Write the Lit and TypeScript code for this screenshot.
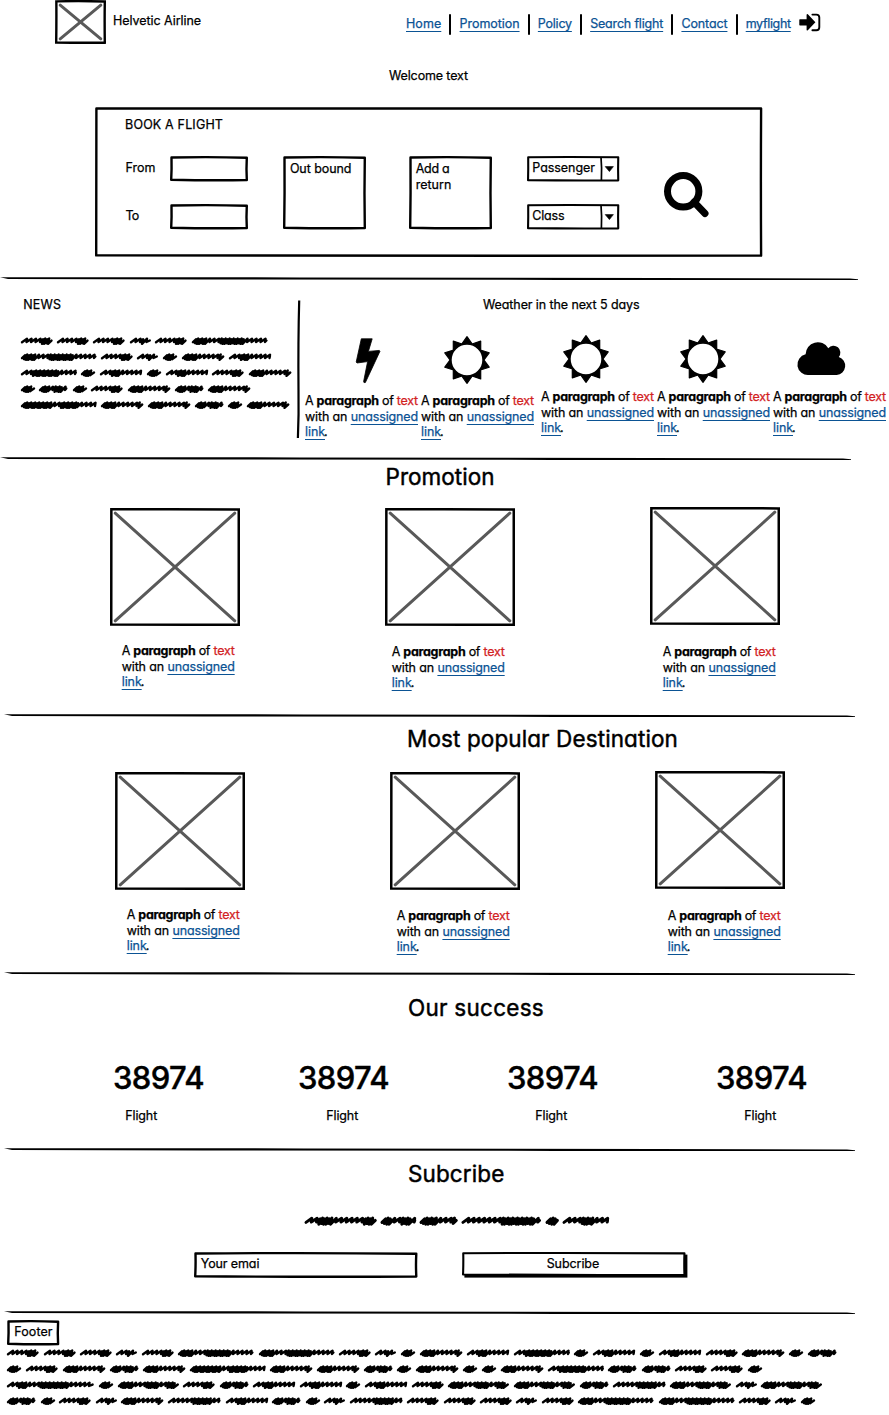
import { LitElement, html, css, svg } from "lit";
import { customElement, property } from "lit/decorators.js";

/** One line of text whose tracking is adjusted so that it spans a given width. */
@customElement("fit-text")
class FitText extends LitElement {
  @property({ type: Number }) span = 0;
  static styles = css`
    :host {
      display: block;
      width: max-content;
      white-space: pre;
    }
  `;
  firstUpdated() {
    const natural = this.getBoundingClientRect().width;
    const count = (this.textContent ?? "").length;
    if (this.span && count) {
      this.style.letterSpacing = `${((this.span - natural) / count).toFixed(3)}px`;
    }
  }
  render() {
    return html`<slot></slot>`;
  }
}

/** Full-width hand-drawn divider. */
@customElement("sketch-rule")
class SketchRule extends LitElement {
  @property({ type: Number }) from = 4;
  @property({ type: Number }) to = 855;
  static styles = css`
    :host { display: block; height: 4px; }
    svg { display: block; overflow: visible; }
  `;
  render() {
    const a = this.from;
    const b = this.to;
    return html`<svg width="889" height="4" viewBox="0 0 889 4">
      <path d="M${a} 1.2 L${a + 300} 1.4 L${b - 200} 1.9 L${b - 8} 2.5 L${b} 3.3 L${b} 3.9 L${b - 300} 3.9 L${a + 200} 3.5 L${a + 8} 3 Z" />
    </svg>`;
  }
}

/** Rectangle with slightly uneven pen strokes; content is stacked on top. */
@customElement("sketch-box")
class SketchBox extends LitElement {
  @property({ type: Number }) w = 100;
  @property({ type: Number }) h = 25;
  @property({ type: Number }) pen = 2.4;
  @property({ type: Number }) wobble = 0.6;
  @property({ type: Boolean }) crossed = false;
  static styles = css`
    :host { display: grid; width: max-content; }
    svg { display: block; grid-area: 1 / 1; overflow: visible; }
    .body { grid-area: 1 / 1; min-width: 0; }
    .frame { fill: none; stroke: #000; stroke-linejoin: round; }
    .square { stroke-linejoin: miter; }
    .cross { fill: none; stroke: #595959; stroke-linecap: round; }
  `;
  render() {
    const { w, h, pen, wobble: k } = this;
    const p = pen / 2;
    const inset = 5.2;
    return html`<svg width=${w} height=${h} viewBox="0 0 ${w} ${h}">
        ${this.crossed
          ? svg`<path class="cross" stroke-width="3" d="M${inset} ${inset}L${w - inset} ${h - inset}M${w - inset} ${inset}L${inset} ${h - inset}"/>`
          : ""}
        <path class="frame ${this.crossed ? "square" : ""}" stroke-width=${pen}
          d="M${p + k * 0.5} ${p + k * 0.5} Q${w / 2} ${p - k} ${w - p} ${p + k * 0.8} Q${w - p - k} ${h / 2} ${w - p} ${h - p - k * 0.4} Q${w / 2} ${h - p + k * 0.5} ${p} ${h - p - k} Q${p + k} ${h / 2} ${p + k * 0.5} ${p + k * 0.5} Z" />
      </svg>
      <div class="body"><slot></slot></div>`;
  }
}

type Stretch = [number, number];

/** Where the pen doubles back, as fractions of a word, by word code. */
const WORDS: Record<string, { w: number; dense: Stretch[] }> = {
  a: { w: 14, dense: [[0, 0.6]] },
  b: { w: 20.8, dense: [[0.35, 0.5]] },
  c: { w: 28.3, dense: [[0, 0.25], [0.45, 0.72]] },
  d: { w: 31.5, dense: [[0.5, 0.95]] },
  e: { w: 42.2, dense: [[0, 0.3], [0.75, 1]] },
  f: { w: 41.9, dense: [[0.15, 0.42]] },
  g: { w: 52.4, dense: [[0.42, 0.76]] },
  h: { w: 55.8, dense: [[0.15, 0.62]] },
  i: { w: 60.8, dense: [[0, 0.2], [0.42, 0.62], [0.75, 0.88]] },
  j: { w: 75.4, dense: [[0, 0.15], [0.35, 0.66]] },
  k: { w: 75.2, dense: [[0, 0.38], [0.5, 0.72]] },
  l: { w: 86.6, dense: [[0.1, 0.2], [0.32, 0.68]] },
  m: { w: 71.3, dense: [[0.12, 0.34], [0.78, 1]] },
  n: { w: 34.8, dense: [[0, 0.2], [0.4, 0.75]] },
  o: { w: 37.3, dense: [[0, 0.35], [0.7, 1]] },
  p: { w: 78.5, dense: [[0.46, 0.88]] },
  q: { w: 12.4, dense: [[0, 1]] },
  r: { w: 45.6, dense: [[0.3, 0.6]] },
};

/** A line of scribbled placeholder words. */
@customElement("scribble-line")
class ScribbleLine extends LitElement {
  @property() words = "";
  @property({ type: Number }) amp = 2.4;
  @property({ type: Number }) pen = 2.4;
  static styles = css`
    :host { display: flex; gap: 4.87px; height: 10px; }
    svg { display: block; flex: none; overflow: visible; }
    path { fill: none; stroke: #000; stroke-linecap: round; stroke-linejoin: round; }
  `;
  private trace(code: string) {
    const { w, dense } = WORDS[code];
    const a = this.amp;
    const s = a / 2.4;
    let x = 1;
    let d = `M${x} ${(5 + a * 0.5).toFixed(1)}`;
    let i = 0;
    while (x + 5.4 * s < w) {
      const thick = dense.some(([from, to]) => x / w >= from && x / w < to);
      const up = thick ? a * (i % 2 ? 1.05 : 0.75) : a * 0.95;
      const down = thick ? a * (i % 3 ? 1.15 : 0.9) : a * 0.4;
      d += `L${(x + (thick ? 3.2 : 5) * s).toFixed(1)} ${(5 - up).toFixed(1)}`;
      x += (thick ? 2 : 4.5) * s;
      d += `L${x.toFixed(1)} ${(5 + down).toFixed(1)}`;
      i++;
    }
    return d + `L${w - 1} ${5 - a * 0.2}`;
  }
  render() {
    return [...this.words].map(
      (c) => html`<svg width=${WORDS[c].w} height="10"><path stroke-width=${this.pen} d=${this.trace(c)} /></svg>`
    );
  }
}

const NAV: [string, number][] = [
  ["Home", 35.3],
  ["Promotion", 60],
  ["Policy", 34],
  ["Search flight", 73],
  ["Contact", 46],
  ["myflight", 45],
];

const sunPath = (() => {
  let d = "";
  for (let i = 0; i < 10; i++) {
    const t = (i * Math.PI) / 5;
    const pt = (r: number, s: number) => `${(24 + r * Math.sin(t + s)).toFixed(1)} ${(24 - r * Math.cos(t + s)).toFixed(1)}`;
    d += `M${pt(23.3, 0)}L${pt(17.2, 0.29)}L${pt(15, 0)}L${pt(17.2, -0.29)}Z`;
  }
  return d;
})();

const sun = html`<svg width="48" height="48" viewBox="0 0 48 48">
  <path d=${sunPath} stroke="#000" stroke-width="1.2" stroke-linejoin="round" />
  <circle cx="24" cy="24" r="16.2" fill="#fff" stroke="#000" stroke-width="1.8" />
</svg>`;

const bolt = html`<svg width="48" height="48" viewBox="0 0 48 48">
  <path d="M17.3 2.8H28.2L24.4 15.4L35.3 14.4L36 15.2L21.4 46.5L20 46.6L19.6 45.6L23.6 25.6L13 27L12.2 26Z" stroke="#000" stroke-width=".8" stroke-linejoin="round" />
</svg>`;

const cloud = html`<svg width="48" height="48" viewBox="0 0 48 48">
  <path d="M10.9 40A10.5 10.5 0 0 1 7.6 19.3A12.2 12.2 0 0 1 30.3 13.2A6.5 6.5 0 0 1 40.8 21.9A9.3 9.3 0 0 1 38.7 40Z" />
</svg>`;

const paragraph = html`<div class="para">
  <fit-text span="112.8">A <b>paragraph</b> of <span class="red">text</span></fit-text>
  <fit-text span="113">with an <a class="link">unassigned</a></fit-text>
  <div class="last"><fit-text class="link" span="20">link</fit-text><span class="dot">.</span></div>
</div>`;

@customElement("app-root")
class AppRoot extends LitElement {
  static styles = css`
    :host {
      display: block;
      width: 889px;
      height: 1415px;
      overflow: hidden;
      background: #fff;
      color: #000;
      font: 400 12.5px/16px Inter, "Open Sans", sans-serif;
      font-feature-settings: "cv11";
      -webkit-text-stroke: 0.25px currentColor;
    }
    section { display: flow-root; box-sizing: border-box; }
    svg { display: block; flex: none; overflow: visible; }
    b { font-weight: 700; }
    .red { color: #d2221f; }
    .link {
      color: #0b5394;
      text-decoration: underline;
      text-decoration-thickness: 1px;
      text-underline-offset: 2.5px;
      text-decoration-skip-ink: none;
    }
    .heading { font-size: 22.5px; line-height: 28px; -webkit-text-stroke: 0.45px currentColor; }

    .intro { height: 276px; }
    .topbar { display: flex; height: 63px; padding-left: 55px; align-items: flex-start; }
    .brand { margin: 12.5px 0 0 7px; width: 293px; }
    .nav { display: flex; margin-top: 13px; }
    .nav .link { margin-top: 2.5px; }
    .bar { width: 2px; height: 20.5px; margin: 1px 8.15px 0; background: #000; border-radius: 1px; }
    .signin { margin: 0 0 0 8px; }
    .welcome { margin: 4.5px 0 23.6px 389px; height: 16px; }
    .booking { margin-left: 95.2px; }
    .booktitle { margin: 10px 0 23.2px 29.9px; }
    .form { display: grid; grid-template-columns: 44.5px 113px 125.9px 118px 137px 50px; padding-left: 30.2px; align-items: start; }
    .pair { display: grid; gap: 22.5px; }
    .pair > fit-text { height: 25.5px; padding-top: 4px; box-sizing: border-box; }
    .areatext { padding: 5px 0 0 7px; }
    .combo { display: flex; }
    .combo fit-text { margin: 4px 0 0 5.6px; }
    .combotext { width: 73px; }
    .search { margin: 15px 0 0 -0.4px; }

    .today { display: flex; height: 176px; }
    .news { width: 277px; padding: 16.5px 0 0 20.5px; }
    .newstitle { margin: 0 0 23.8px 2.7px; }
    .scribbles { display: grid; row-gap: 5.85px; }
    .weather { padding-top: 16.5px; }
    .weathertitle { margin-left: 183px; }
    .days { display: flex; margin: 22px 0 0 5px; }
    .day { width: 116px; flex: none; }
    .icon { height: 54px; }
    .i0 { padding-left: 39px; }
    .i1 { padding-left: 22px; }
    .i2 { padding-left: 21px; }
    .i3 { padding-left: 22px; }
    .i4 { padding-left: 25px; }
    .gap { width: 4px; flex: none; }
    .first .para { margin-top: 4px; }
    .first .icon { padding-top: 1px; height: 53px; }

    .para { height: 47px; }
    .para fit-text { height: 16px; }
    .para fit-text:nth-child(2) { height: 15px; }
    .last { display: flex; }
    .dot { margin-left: -1px; }

    .promo { height: 253px; }
    .promo .heading { margin: 3px 0 17px 385.5px; height: 28px; }
    .popular { height: 254px; }
    .popular .heading { margin: 8px 0 19px 407px; height: 28px; }
    .cards { display: flex; padding-left: 110px; }
    .popular .cards { padding-left: 115px; }
    .card { width: 275px; flex: none; }
    .card:nth-child(2) { width: 265px; }
    .card:nth-child(3) { margin-top: -1px; }
    .card .para { margin: 17.2px 0 0 11.7px; }
    .card:nth-child(2) .para { margin: 18px 0 0 6.7px; }
    .card:nth-child(3) .para { margin: 19px 0 0 12.7px; }

    .success { height: 172px; }
    .success .heading { margin-left: 408px; padding-top: 18.5px; }
    .stats { display: flex; margin: 37.5px 0 0 113px; }
    .stat { width: 209px; flex: none; }
    .stat:first-child { width: 185px; }
    .figure { font-size: 31px; line-height: 38px; font-weight: 500; height: 49px; -webkit-text-stroke: 0.4px #000; }
    .stat .label { margin-left: 28.3px; }
    .stat:first-child .label { margin-left: 12.3px; }

    .subscribe { height: 159px; }
    .subscribe .heading { margin-left: 408px; padding-top: 8.5px; }
    .pitch { margin: 28px 0 26px 304.5px; }
    .signup { display: flex; gap: 44.2px; margin-left: 194.3px; }
    .email { margin: 4.2px 0 0 6.5px; }
    .press { box-shadow: 2.4px 2.6px 0 0 #000; background: #fff; height: 23.5px; }
    .press fit-text { margin: 4.2px 0 0 84.7px; }

    .foot { padding: 5.5px 0 0 7.4px; }
    .foottitle { margin: 4.5px 0 0 6.8px; }
    .foot .scribbles { margin-top: 3px; }
  `;

  private cards() {
    return html`<div class="cards">
      ${[0, 1, 2].map(
        () => html`<div class="card">
          <sketch-box w="130" h="118" pen="2.5" wobble="0.2" crossed></sketch-box>
          ${paragraph}
        </div>`
      )}
    </div>`;
  }

  private combo(label: string, span: number) {
    return html`<sketch-box w="92.3" h="25.5" pen="2.1" wobble="0.3">
      <div class="combo">
        <div class="combotext"><fit-text span=${span}>${label}</fit-text></div>
        <svg width="16" height="25" viewBox="0 0 16 25">
          <path d="M1 1.2Q2 12 1.4 24.5" fill="none" stroke="#000" stroke-width="1.7" />
          <path d="M5.2 10.6H13.4L9.4 15.6Z" stroke="#000" stroke-width=".6" stroke-linejoin="round" />
        </svg>
      </div>
    </sketch-box>`;
  }

  render() {
    const icons = [bolt, sun, sun, sun, cloud];
    return html`
      <section class="intro">
        <div class="topbar">
          <sketch-box w="51" h="44" pen="2.4" wobble="0.3" crossed></sketch-box>
          <div class="brand"><fit-text span="88">Helvetic Airline</fit-text></div>
          <div class="nav">
            ${NAV.map(
              ([label, w], i) => html`${i ? html`<div class="bar"></div>` : ""}<fit-text class="link" span=${w}>${label}</fit-text>`
            )}
            <svg class="signin" width="22" height="20" viewBox="0 0 22 20">
              <path d="M.8 6.2H7.6V1.4L8.6 1L16.4 9.3L8.6 17.6L7.6 17.2V12.6H.8L.3 12V6.8Z" />
              <path d="M13.4 1.6H17.4Q20.3 1.6 20.3 4.5V14.3Q20.3 17.3 17.4 17.3H13.4" fill="none" stroke="#000" stroke-width="1.9" stroke-linecap="round" />
            </svg>
          </div>
        </div>
        <fit-text class="welcome" span="79">Welcome text</fit-text>
        <sketch-box class="booking" w="667.3" h="150" pen="2.4" wobble="0.4">
          <fit-text class="booktitle" span="98">BOOK A FLIGHT</fit-text>
          <div class="form">
            <div class="pair">
              <fit-text span="30">From</fit-text>
              <fit-text span="13.3">To</fit-text>
            </div>
            <div class="pair">
              <sketch-box w="78" h="25.5"></sketch-box>
              <sketch-box w="78" h="25.5"></sketch-box>
            </div>
            <sketch-box w="83" h="73.5">
              <div class="areatext"><fit-text span="61.5">Out bound</fit-text></div>
            </sketch-box>
            <sketch-box w="83" h="73.5">
              <div class="areatext">
                <fit-text span="33.5">Add a</fit-text>
                <fit-text span="35.5">return</fit-text>
              </div>
            </sketch-box>
            <div class="pair">${this.combo("Passenger", 62.5)}${this.combo("Class", 32)}</div>
            <svg class="search" width="48" height="48" viewBox="0 0 48 48">
              <circle cx="20.2" cy="20.3" r="15.7" fill="none" stroke="#000" stroke-width="7" />
              <path d="M31 31L42 42.5" stroke="#000" stroke-width="7" stroke-linecap="round" />
            </svg>
          </div>
        </sketch-box>
      </section>
      <sketch-rule from="0" to="858"></sketch-rule>

      <section class="today">
        <div class="news">
          <fit-text class="newstitle" span="38">NEWS</fit-text>
          <div class="scribbles">
            ${["dddbdj", "jdbaef", "hafafde", "acadece", "keecae"].map((l) => html`<scribble-line words=${l}></scribble-line>`)}
          </div>
        </div>
        <svg width="3" height="160" viewBox="0 0 3 160">
          <path d="M2.2 20.5Q1.1 60 1.5 110Q1.9 135 .9 158" fill="none" stroke="#000" stroke-width="2.2" />
        </svg>
        <div class="weather">
          <fit-text class="weathertitle" span="156.5">Weather in the next 5 days</fit-text>
          <div class="days">
            ${icons.map(
              (icon, i) => html`${i === 2 ? html`<div class="gap"></div>` : ""}
                <div class="day ${i < 2 ? "first" : ""}">
                  <div class="icon i${i}">${icon}</div>
                  ${paragraph}
                </div>`
            )}
          </div>
        </div>
      </section>
      <sketch-rule from="0" to="851"></sketch-rule>

      <section class="promo">
        <fit-text class="heading" span="109">Promotion</fit-text>
        ${this.cards()}
      </section>
      <sketch-rule></sketch-rule>

      <section class="popular">
        <fit-text class="heading" span="271">Most popular Destination</fit-text>
        ${this.cards()}
      </section>
      <sketch-rule></sketch-rule>

      <section class="success">
        <fit-text class="heading" span="136">Our success</fit-text>
        <div class="stats">
          ${[0, 1, 2, 3].map(
            () => html`<div class="stat">
              <fit-text class="figure" span="91">38974</fit-text>
              <fit-text class="label" span="31.8">Flight</fit-text>
            </div>`
          )}
        </div>
      </section>
      <sketch-rule></sketch-rule>

      <section class="subscribe">
        <fit-text class="heading" span="96.5">Subcribe</fit-text>
        <scribble-line class="pitch" words="mnopqr" amp="2.8" pen="3"></scribble-line>
        <div class="signup">
          <sketch-box w="223.5" h="26">
            <fit-text class="email" span="58.5">Your emai</fit-text>
          </sketch-box>
          <div class="press">
            <sketch-box w="223.5" h="24" pen="2.1" wobble="0.4">
              <fit-text span="52.5">Subcribe</fit-text>
            </sketch-box>
          </div>
        </div>
      </section>
      <sketch-rule></sketch-rule>

      <section class="foot">
        <sketch-box w="52.3" h="25.5">
          <fit-text class="foottitle" span="38.5">Footer</fit-text>
        </sketch-box>
        <div class="scribbles">
          ${["dddbdjjdbaefhafafdeac", "adecekeecaeaaehccdda", "laidcffafdiicgibi", "cadbegfcabgdddbdjjdba"].map(
            (l) => html`<scribble-line words=${l}></scribble-line>`
          )}
        </div>
      </section>
    `;
  }
}
